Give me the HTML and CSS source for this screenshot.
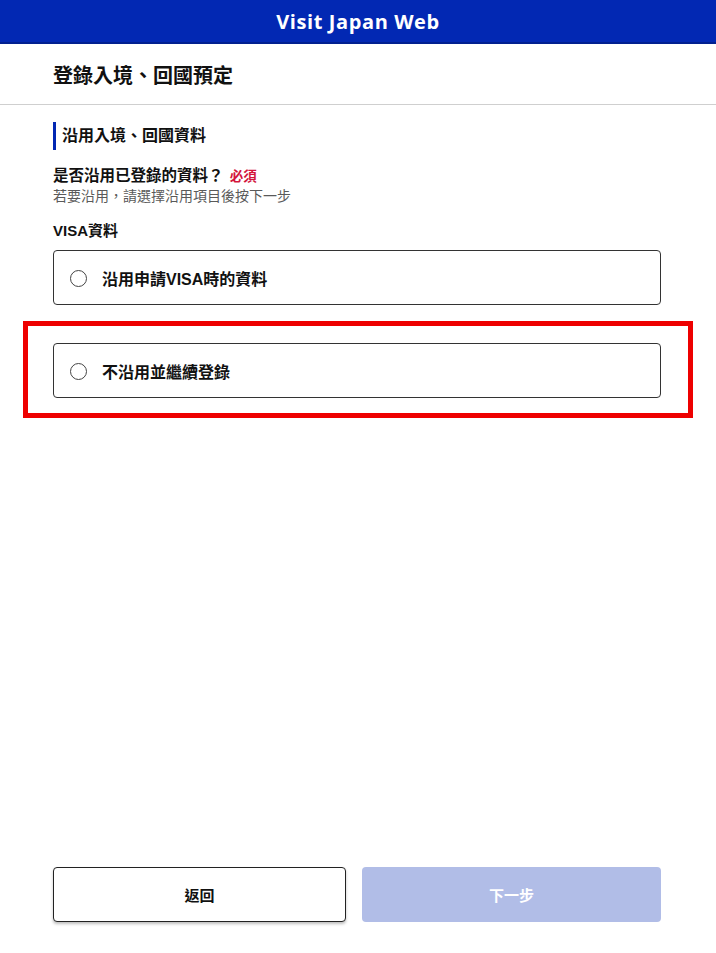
FILE: index.html
```html
<!DOCTYPE html>
<html lang="zh-Hant">
<head>
    <meta charset="UTF-8">
    <meta name="viewport" content="width=device-width, initial-scale=1.0">
    <title>Visit Japan Web</title>
    <link rel="stylesheet" href="styles.css">
</head>
<body>

    <!-- Top bar -->
    <header class="site-header">
        <span>Visit Japan Web</span>
    </header>

    <div class="page-title">
        <h1>登錄入境、回國預定</h1>
    </div>

    <main class="content">
        <h2 class="section-heading">沿用入境、回國資料</h2>

        <div class="question">
            <p class="question-label">是否沿用已登錄的資料？ <span class="required">必須</span></p>
            <p class="question-hint">若要沿用，請選擇沿用項目後按下一步</p>
        </div>

        <p class="group-label">VISA資料</p>

        <label class="option">
            <input type="radio" name="reuse" value="visa">
            <span>沿用申請VISA時的資料</span>
        </label>

        <!-- Highlighted option -->
        <div class="highlight">
            <label class="option">
                <input type="radio" name="reuse" value="none">
                <span>不沿用並繼續登錄</span>
            </label>
        </div>
    </main>

    <!-- Bottom buttons -->
    <footer class="actions">
        <button class="btn btn-back">返回</button>
        <button class="btn btn-next" disabled>下一步</button>
    </footer>

</body>
</html>
```

FILE: styles.css
```css
body {
    margin: 0;
    min-height: 953px;
    display: flex;
    flex-direction: column;
    background-color: #ffffff;
    color: #111111;
    font-family: "Liberation Sans", "Noto Sans CJK TC", sans-serif;
    box-sizing: border-box;
}
p, h1, h2 {
    margin: 0;
}
.site-header {
    height: 42px;
    background-color: #0228b3;
    border-bottom: 2px solid #01208f;
    display: flex;
    align-items: center;
    justify-content: center;
    color: #ffffff;
    font-family: "Open Sans", sans-serif;
    font-weight: 700;
    font-size: 20px;
    letter-spacing: 0.6px;
}
.page-title {
    height: 60px;
    padding: 0 53px;
    display: flex;
    align-items: center;
    border-bottom: 1px solid #cfcfcf;
}
.page-title h1 {
    font-size: 20px;
    font-weight: 700;
    margin-top: 1px;
}
.content {
    flex: 1;
    padding: 17px 55px 0 53px;
}
.section-heading {
    border-left: 3px solid #0228b3;
    padding-left: 6px;
    font-size: 16px;
    font-weight: 700;
    line-height: 28px;
}
.question {
    margin-top: 15px;
}
.question-label {
    font-size: 15.5px;
    font-weight: 700;
    line-height: 21px;
}
.required {
    color: #d3153c;
    font-size: 13.5px;
    margin-left: 2px;
}
.question-hint {
    font-size: 14px;
    color: #5a5a5a;
    line-height: 18px;
}
.group-label {
    margin-top: 16px;
    font-size: 15px;
    font-weight: 700;
    line-height: 20px;
}
.option {
    margin-top: 9px;
    height: 55px;
    border: 1px solid #333333;
    border-radius: 4px;
    box-sizing: border-box;
    display: flex;
    align-items: center;
    padding-left: 16px;
    font-size: 16px;
    font-weight: 700;
    cursor: pointer;
}
.option input {
    appearance: none;
    width: 17px;
    height: 17px;
    margin: 2px 15px 0 0;
    border: 1.5px solid #444444;
    border-radius: 50%;
    background-color: #ffffff;
    box-sizing: border-box;
}
.option input:checked {
    border: 5px solid #0228b3;
}
.highlight {
    margin: 16px -32px 0 -30px;
    border: 5px solid #ee0000;
    padding: 17px 27px 15px 25px;
}
.highlight .option {
    margin-top: 0;
}
.actions {
    display: flex;
    gap: 16px;
    padding: 0 55px 31px 53px;
}
.btn {
    height: 55px;
    border-radius: 4px;
    font-family: "Liberation Sans", "Noto Sans CJK TC", sans-serif;
    font-size: 15px;
    font-weight: 700;
}
.btn-back {
    flex: 292;
    background-color: #ffffff;
    border: 1px solid #222222;
    color: #111111;
    box-shadow: 0 2px 3px rgba(0, 0, 0, 0.25);
    cursor: pointer;
}
.btn-next {
    flex: 300;
    background-color: #b1bde7;
    border: none;
    color: #ffffff;
}
```
